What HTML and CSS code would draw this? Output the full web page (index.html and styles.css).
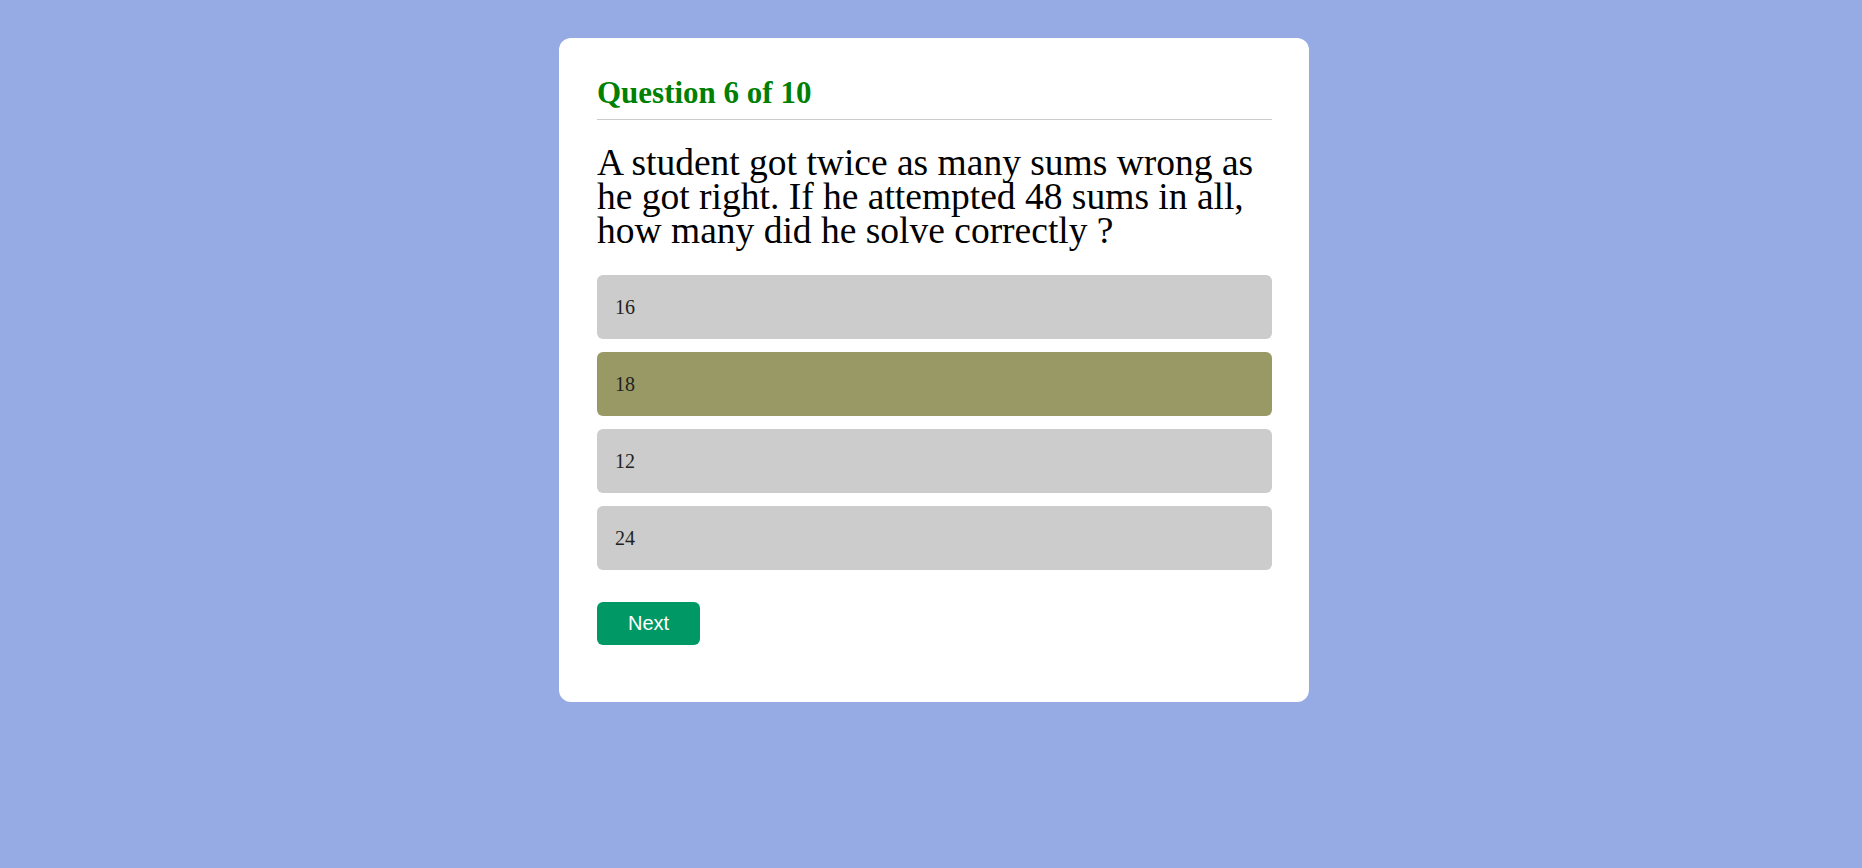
FILE: index.html
```html
<!DOCTYPE html>
<html lang="en">
<head>
<meta charset="utf-8">
<title>Quiz</title>
<link rel="stylesheet" href="styles.css">
</head>
<body>
<main class="quiz">
  <h2 class="quiz-title">Question 6 of 10</h2>
  <p class="question">A student got twice as many sums wrong as he got right. If he attempted 48 sums in all, how many did he solve correctly ?</p>
  <ul class="options">
    <li class="option">16</li>
    <li class="option selected">18</li>
    <li class="option">12</li>
    <li class="option">24</li>
  </ul>
  <button class="next-btn">Next</button>
</main>
</body>
</html>
```
FILE: styles.css
```css
html, body {
  margin: 0;
  padding: 0;
}
body {
  background: #96aae4;
  font-family: "Liberation Serif", "Times New Roman", serif;
  min-height: 868px;
  padding-top: 38px;
  padding-left: 6px;
  box-sizing: border-box;
}
.quiz {
  width: 750px;
  box-sizing: border-box;
  margin: 0 auto;
  background: #fff;
  border-radius: 12px;
  padding: 36.5px 37.5px 57px 38px;
}
.quiz-title {
  margin: 0;
  font-size: 31px;
  font-weight: bold;
  color: #008000;
  padding-bottom: 8.5px;
  border-bottom: 1px solid #cccccc;
}
.question {
  margin: 25.5px 0 0;
  font-size: 37.5px;
  line-height: 34px;
  color: #000;
}
.options {
  list-style: none;
  margin: 27.5px 0 0;
  padding: 0;
  display: flex;
  flex-direction: column;
  gap: 13px;
}
.option {
  height: 64px;
  box-sizing: border-box;
  padding: 20px 18px;
  line-height: 24px;
  font-size: 20px;
  color: #222;
  background: #cccccc;
  border-radius: 6px;
}
.option.selected {
  background: #999966;
}
.next-btn {
  margin-top: 31.5px;
  display: block;
  width: 103px;
  height: 43px;
  border: none;
  border-radius: 6px;
  background: #009966;
  color: #fff;
  font-family: "Liberation Sans", Arial, sans-serif;
  font-size: 20px;
  padding: 0;
}
```
